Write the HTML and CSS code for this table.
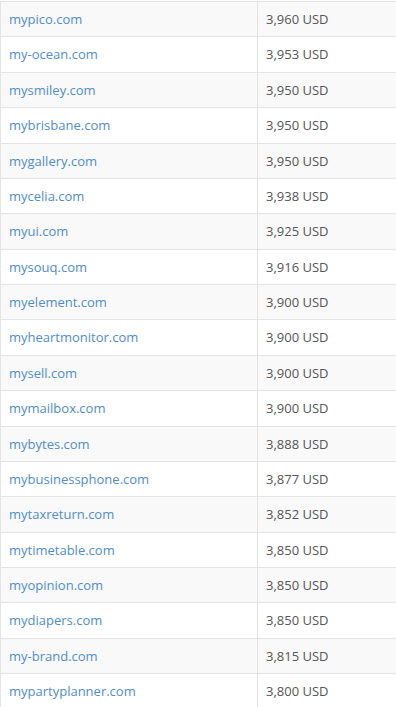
FILE: index.html
```html
<!DOCTYPE html>
<html>
<head>
<meta charset="utf-8">
<link rel="stylesheet" href="styles.css">
</head>
<body>
<div class="wrap">
<table class="domains">
<tbody>
<tr><td class="name"><a href="#">mypico.com</a></td><td class="price">3,960 USD</td></tr>
<tr><td class="name"><a href="#">my-ocean.com</a></td><td class="price">3,953 USD</td></tr>
<tr><td class="name"><a href="#">mysmiley.com</a></td><td class="price">3,950 USD</td></tr>
<tr><td class="name"><a href="#">mybrisbane.com</a></td><td class="price">3,950 USD</td></tr>
<tr><td class="name"><a href="#">mygallery.com</a></td><td class="price">3,950 USD</td></tr>
<tr><td class="name"><a href="#">mycelia.com</a></td><td class="price">3,938 USD</td></tr>
<tr><td class="name"><a href="#">myui.com</a></td><td class="price">3,925 USD</td></tr>
<tr><td class="name"><a href="#">mysouq.com</a></td><td class="price">3,916 USD</td></tr>
<tr><td class="name"><a href="#">myelement.com</a></td><td class="price">3,900 USD</td></tr>
<tr><td class="name"><a href="#">myheartmonitor.com</a></td><td class="price">3,900 USD</td></tr>
<tr><td class="name"><a href="#">mysell.com</a></td><td class="price">3,900 USD</td></tr>
<tr><td class="name"><a href="#">mymailbox.com</a></td><td class="price">3,900 USD</td></tr>
<tr><td class="name"><a href="#">mybytes.com</a></td><td class="price">3,888 USD</td></tr>
<tr><td class="name"><a href="#">mybusinessphone.com</a></td><td class="price">3,877 USD</td></tr>
<tr><td class="name"><a href="#">mytaxreturn.com</a></td><td class="price">3,852 USD</td></tr>
<tr><td class="name"><a href="#">mytimetable.com</a></td><td class="price">3,850 USD</td></tr>
<tr><td class="name"><a href="#">myopinion.com</a></td><td class="price">3,850 USD</td></tr>
<tr><td class="name"><a href="#">mydiapers.com</a></td><td class="price">3,850 USD</td></tr>
<tr><td class="name"><a href="#">my-brand.com</a></td><td class="price">3,815 USD</td></tr>
<tr><td class="name"><a href="#">mypartyplanner.com</a></td><td class="price">3,800 USD</td></tr>
</tbody>
</table>
</div>
</body>
</html>
```
FILE: styles.css
```css
html, body {
  margin: 0;
  padding: 0;
  background: #fff;
  overflow: hidden;
}
.wrap {
  padding-top: 1px;
}
.domains {
  border-collapse: collapse;
  width: 100%;
  font-family: "Open Sans", "Liberation Sans", sans-serif;
  font-size: 13px;
  color: #555;
}
.domains td {
  border: 1px solid #e4e4e4;
  padding: 8px 8px;
  line-height: 18.37px;
  height: 18.37px;
  white-space: nowrap;
}
.domains td.name {
  width: 240px;
}
.domains td.price {
  border-right: 0;
}
.domains tr:nth-child(odd) td {
  background: #f9f9f9;
}
.domains a {
  color: #4f8dca;
  text-decoration: none;
}
```
